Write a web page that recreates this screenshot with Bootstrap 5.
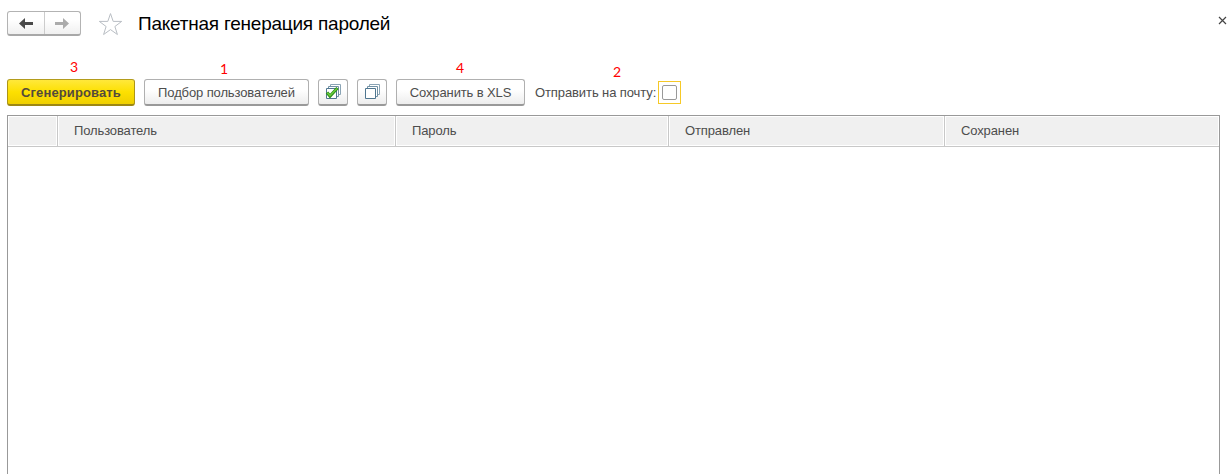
<!DOCTYPE html>
<html lang="ru">
<head>
<meta charset="utf-8">
<meta name="viewport" content="width=device-width, initial-scale=1">
<title>Пакетная генерация паролей</title>
<link href="https://cdn.jsdelivr.net/npm/bootstrap@5.3.0/dist/css/bootstrap.min.css" rel="stylesheet">
<style>
body{font-family:"Liberation Sans",Arial,sans-serif;font-size:13px;line-height:16px;color:#4d4d4d;background:#fff;height:474px;overflow:hidden}
.page-head{height:46px;padding:11px 0 0 7px}
.nav-pair{width:74px;height:25px;border:1px solid #b3b3b3;border-bottom:2px solid #a8a8a8;border-radius:3px;background:linear-gradient(#fff 35%,#f0f0f0)}
.nav-pair .btn{border:0;padding:0;width:36px;height:22px;line-height:0;border-radius:0}
.nav-pair .btn+.btn{border-left:1px solid #ccc}
.star{margin:0 0 0 17px}
.page-title{font-size:19px;line-height:24px;color:#000;margin:1px 0 0 15px;letter-spacing:-.23px;font-weight:400;white-space:nowrap}
.close-x{padding:0;margin:5px 0 0 0;border:0;line-height:0}
.tools{height:69px;padding:33px 0 0 7px}
.tool{position:relative;height:27px;white-space:nowrap}
.tool .btn{height:27px;width:100%;padding:0;font-size:13px;line-height:24px;color:#4d4d4d;border:1px solid #b0b0b0;border-bottom:2px solid #999;border-radius:3px;background:linear-gradient(#fff 40%,#ededed);letter-spacing:-.12px;display:block}
.tool .btn svg{display:block;margin:0 auto}
.tool .btn-gen{font-weight:700;border-color:#b39c1c #ad9516 #9c8714;background:linear-gradient(#ffe83b,#fde000 50%,#efcf00);letter-spacing:.12px;color:#534a3c}
.btn-text{position:relative;top:1px}
.step{position:absolute;font:14px/16px Lato,"Open Sans",sans-serif;color:#f00}
.w-gen{width:128px}.w-pick{width:165px;margin-left:9px}.w-ico{width:30px;margin-left:9px}.w-xls{width:129px;margin-left:9px}
.mail{margin-left:10px}
.mail label{width:123px;line-height:27px;letter-spacing:-.1px}
.focus-box{width:23px;height:23px;border:1px solid #f6c927;margin-top:2px;padding:3px}
.focus-box .form-check-input{display:block;width:15px;height:15px;margin:0;border:1px solid #999;border-radius:2px;box-shadow:none}
.list-frame{margin:0 7px 0 7px;border:1px solid #999;height:370px}
.list-head{height:31px;border-bottom:1px solid #c8c8c8}
.list-head>div{border-right:1px solid #c8c8c8;padding:1px}
.list-head>div:last-child{border-right:0}
.list-head span{display:block;height:28px;background:#f0f0f0;padding-left:15px;line-height:28px;letter-spacing:-.12px}
.c0{width:50px}.c1{width:338px}.c2{width:273px}.c3{width:276px}
</style>
</head>
<body>
<header class="page-head d-flex align-items-start">
  <div class="nav-pair d-flex">
    <button class="btn" aria-label="Назад"><svg width="36" height="22"><path d="M11 11.500L17 6v4h8v3h-8v4z" fill="#4a4a4a"/></svg></button>
    <button class="btn" aria-label="Вперед"><svg width="35" height="22"><path d="M24 11.500L18 6v4h-8v3h8v4z" fill="#ababab"/></svg></button>
  </div>
  <svg class="star" width="25" height="25"><path d="M12.500 2.600l2.700 7.800h8.500l-6.800 5.100 2.500 8-6.900-4.900-6.900 4.900 2.500-8-6.800-5.100h8.500z" fill="#fff" stroke="#b9bec4"/></svg>
  <h1 class="page-title">Пакетная генерация паролей</h1>
  <button class="btn close-x ms-auto" aria-label="Закрыть"><svg width="9" height="9"><path d="M1 1l7 7M8 1L1 8" stroke="#444" stroke-width="1.200"/></svg></button>
</header>
<div class="tools d-flex align-items-start">
  <div class="tool w-gen"><span class="step" style="left:63px;top:-20px">3</span><button class="btn btn-gen"><span class="btn-text">Сгенерировать</span></button></div>
  <div class="tool w-pick"><span class="step" style="left:76px;top:-18px">1</span><button class="btn"><span class="btn-text">Подбор пользователей</span></button></div>
  <div class="tool w-ico"><button class="btn" aria-label="Отметить все"><svg width="16" height="16"><g fill="#fff" stroke="#4f7690"><path d="M5.500.5h10v10h-10z" stroke="#8aa4b5"/><path d="M3.500 2.500h10v10h-10z" stroke="#7191a5"/><path d="M1.500 4.500h10v10h-10z"/></g><path d="M2 8.500l3 3.500L12.500 4" fill="none" stroke="#2b8a1b" stroke-width="3.200"/><path d="M2.300 8.700l2.700 2.900L12 4.500" fill="none" stroke="#66cb39" stroke-width="1.600"/></svg></button></div>
  <div class="tool w-ico"><button class="btn" aria-label="Снять отметки"><svg width="16" height="16"><g fill="#fff" stroke="#4f7690"><path d="M5.500.5h10v10h-10z" stroke="#8aa4b5"/><path d="M3.500 2.500h10v10h-10z" stroke="#7191a5"/><path d="M1.500 4.500h10v10h-10z"/></g></svg></button></div>
  <div class="tool w-xls"><span class="step" style="left:60px;top:-19px">4</span><button class="btn"><span class="btn-text">Сохранить в XLS</span></button></div>
  <div class="tool mail d-flex"><span class="step" style="left:78px;top:-15px">2</span><label for="mail">Отправить на почту:</label><div class="focus-box"><input class="form-check-input" type="checkbox" id="mail"></div></div>
</div>
<main class="list-frame">
  <div class="list-head d-flex">
    <div class="c0"><span></span></div><div class="c1"><span>Пользователь</span></div><div class="c2"><span>Пароль</span></div><div class="c3"><span>Отправлен</span></div><div class="flex-fill"><span>Сохранен</span></div>
  </div>
</main>
<script src="https://cdn.jsdelivr.net/npm/bootstrap@5.3.0/dist/js/bootstrap.bundle.min.js"></script>
</body>
</html>
